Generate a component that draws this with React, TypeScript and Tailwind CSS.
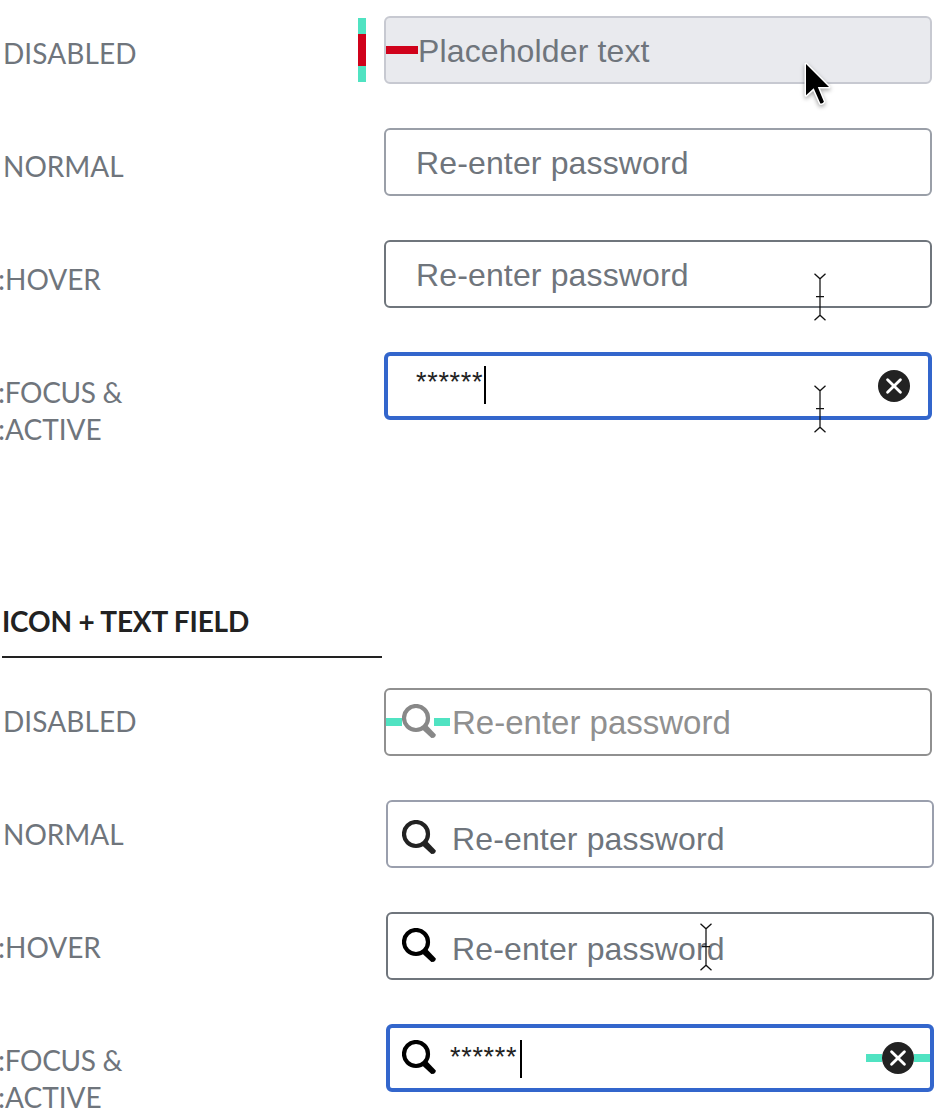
import type { ReactNode } from "react";

function SearchIcon({ className }: { className: string }) {
  return (
    <svg className={"block h-[34px] w-[34px] shrink-0 " + className} viewBox="0 0 34 34" fill="none">
      <circle cx="14" cy="14" r="12" stroke="currentColor" strokeWidth="4.2" />
      <path d="M20.2 25.4 L25 21.2 L33.8 30.4 L33.6 32 L32 33.8 L29.4 34 Z" fill="currentColor" />
    </svg>
  );
}

function ClearIcon() {
  return (
    <svg className="block h-8 w-8 shrink-0" viewBox="0 0 32 32">
      <circle cx="16" cy="16" r="16" fill="#222222" />
      <path d="M9.6 9.8 L22.4 22.2 M22.4 9.8 L9.6 22.2" stroke="#fff" strokeWidth="2.9" strokeLinecap="round" />
    </svg>
  );
}

function TextCursor({ className }: { className: string }) {
  return (
    <svg className={"absolute h-12 w-3 " + className} viewBox="0 0 12 48" fill="none" stroke="#111" strokeWidth="1.25">
      <path d="M0.5 0.8 L6 5.8 L11.5 0.8 M6 5.6 V42.4 M0.5 47.2 L6 42.2 L11.5 47.2 M2 23.5 H10" />
    </svg>
  );
}

function ArrowCursor({ className }: { className: string }) {
  return (
    <svg className={"absolute h-[52px] w-8 overflow-visible drop-shadow-[0_2px_2px_rgba(0,0,0,0.35)] " + className} viewBox="0 0 32 52">
      <path
        d="M2 2 V33.3 L9.7 26.3 L16.4 41.4 Q18.6 42 19.9 39.8 L13.8 25 H25 Z"
        fill="#000"
        stroke="#fff"
        strokeWidth="3"
        strokeLinejoin="round"
        paintOrder="stroke"
      />
    </svg>
  );
}

function Labels() {
  return (
    <div className="w-[384px] shrink-0 text-[28px] leading-[37px] text-[#6f757c]">
      <div className="h-[113px] pl-[3px] tracking-[0.08px]">DISABLED</div>
      <div className="h-[113px] pl-[3px]">NORMAL</div>
      <div className="-ml-0.5 h-[113px]">:HOVER</div>
      <div className="-ml-0.5">
        <span className="tracking-[-0.3px]">:FOCUS &amp;</span>
        <br />
        :ACTIVE
      </div>
    </div>
  );
}

function Field({ className, children }: { className: string; children: ReactNode }) {
  return (
    <div className={"relative flex h-[68px] w-[548px] items-start rounded-md " + className}>{children}</div>
  );
}

function FieldText({ className, children }: { className: string; children: ReactNode }) {
  return (
    <span className={"font-['Liberation_Sans',sans-serif] leading-9 whitespace-nowrap " + className}>{children}</span>
  );
}

export default function App() {
  return (
    <main className="h-[1110px] w-[934px] overflow-hidden bg-white font-[Lato,sans-serif]">
      <section className="flex h-[600px] pt-4">
        <div className="pt-[19px]">
          <Labels />
        </div>
        <div className="flex flex-col gap-11">
          <Field className="border-2 border-[#c7c9d1] bg-[#e9eaee]">
            <div className="absolute top-0 -left-7 flex w-2 flex-col">
              <div className="h-4 bg-[#50e3c2]" />
              <div className="h-8 bg-[#d0021b]" />
              <div className="h-4 bg-[#50e3c2]" />
            </div>
            <div className="mt-7 h-2 w-8 bg-[#d0021b]" />
            <FieldText className="mt-[15px] text-[32px] tracking-[0.13px] text-[#6f757c]">Placeholder text</FieldText>
            <ArrowCursor className="top-[44px] left-[418px]" />
          </Field>
          <Field className="border-2 border-[#9a9fa8] pl-[30px]">
            <FieldText className="mt-[15px] text-[32px] tracking-[0.14px] text-[#6f757c]">Re-enter password</FieldText>
          </Field>
          <Field className="border-2 border-[#6f757c] pl-[30px]">
            <FieldText className="mt-[15px] text-[32px] tracking-[0.14px] text-[#6f757c]">Re-enter password</FieldText>
            <TextCursor className="top-[31px] left-[427.5px]" />
          </Field>
          <Field className="border-4 border-[#3366cc] pl-7">
            <FieldText className="mt-2 text-[27px] tracking-[0.7px] text-[#222222]">******</FieldText>
            <div className="mt-2.5 ml-px h-[38px] w-0.5 bg-black" />
            <div className="mt-3.5 mr-[18px] ml-auto">
              <ClearIcon />
            </div>
            <TextCursor className="top-[29px] left-[425.5px]" />
          </Field>
        </div>
      </section>

      <h2 className="ml-0.5 h-[58px] w-[380px] border-b-2 border-[#222222] pt-[2px] text-[28px] leading-[38px] font-bold tracking-[-0.18px] text-[#222222]">
        ICON + TEXT FIELD
      </h2>

      <section className="flex pt-[30px]">
        <div className="pt-[15px]">
          <Labels />
        </div>
        <div className="flex flex-col gap-11">
          <Field className="border-2 border-[#909090]">
            <div className="mt-7 h-2 w-4 bg-[#50e3c2]" />
            <div className="mt-3.5">
              <SearchIcon className="text-[#888888]" />
            </div>
            <div className="mt-7 -ml-0.5 h-2 w-4 bg-[#50e3c2]" />
            <FieldText className="mt-[15px] ml-0.5 text-[33px] text-[#909090]">Re-enter password</FieldText>
          </Field>
          <Field className="ml-0.5 border-2 border-[#9a9fad] pl-3.5">
            <div className="mt-[18px]">
              <SearchIcon className="text-[#222222]" />
            </div>
            <FieldText className="mt-[19px] ml-4 text-[32px] tracking-[0.14px] text-[#6f757c]">Re-enter password</FieldText>
          </Field>
          <Field className="ml-0.5 border-2 border-[#6f757c] pl-3.5">
            <div className="mt-3.5">
              <SearchIcon className="text-black" />
            </div>
            <FieldText className="mt-[17px] ml-4 text-[32px] tracking-[0.14px] text-[#6f757c]">Re-enter password</FieldText>
            <TextCursor className="top-[9px] left-[311.5px]" />
          </Field>
          <Field className="ml-0.5 border-4 border-[#3366cc] pl-3">
            <div className="mt-3">
              <SearchIcon className="text-black" />
            </div>
            <FieldText className="mt-[11px] ml-3.5 text-[27px] tracking-[0.7px] text-[#222222]">******</FieldText>
            <div className="mt-3 ml-[3px] h-[38px] w-0.5 bg-black" />
            <div className="mt-3.5 ml-auto flex items-center">
              <div className="h-2 w-4 bg-[#50e3c2]" />
              <ClearIcon />
              <div className="h-2 w-4 bg-[#50e3c2]" />
            </div>
          </Field>
        </div>
      </section>
    </main>
  );
}
